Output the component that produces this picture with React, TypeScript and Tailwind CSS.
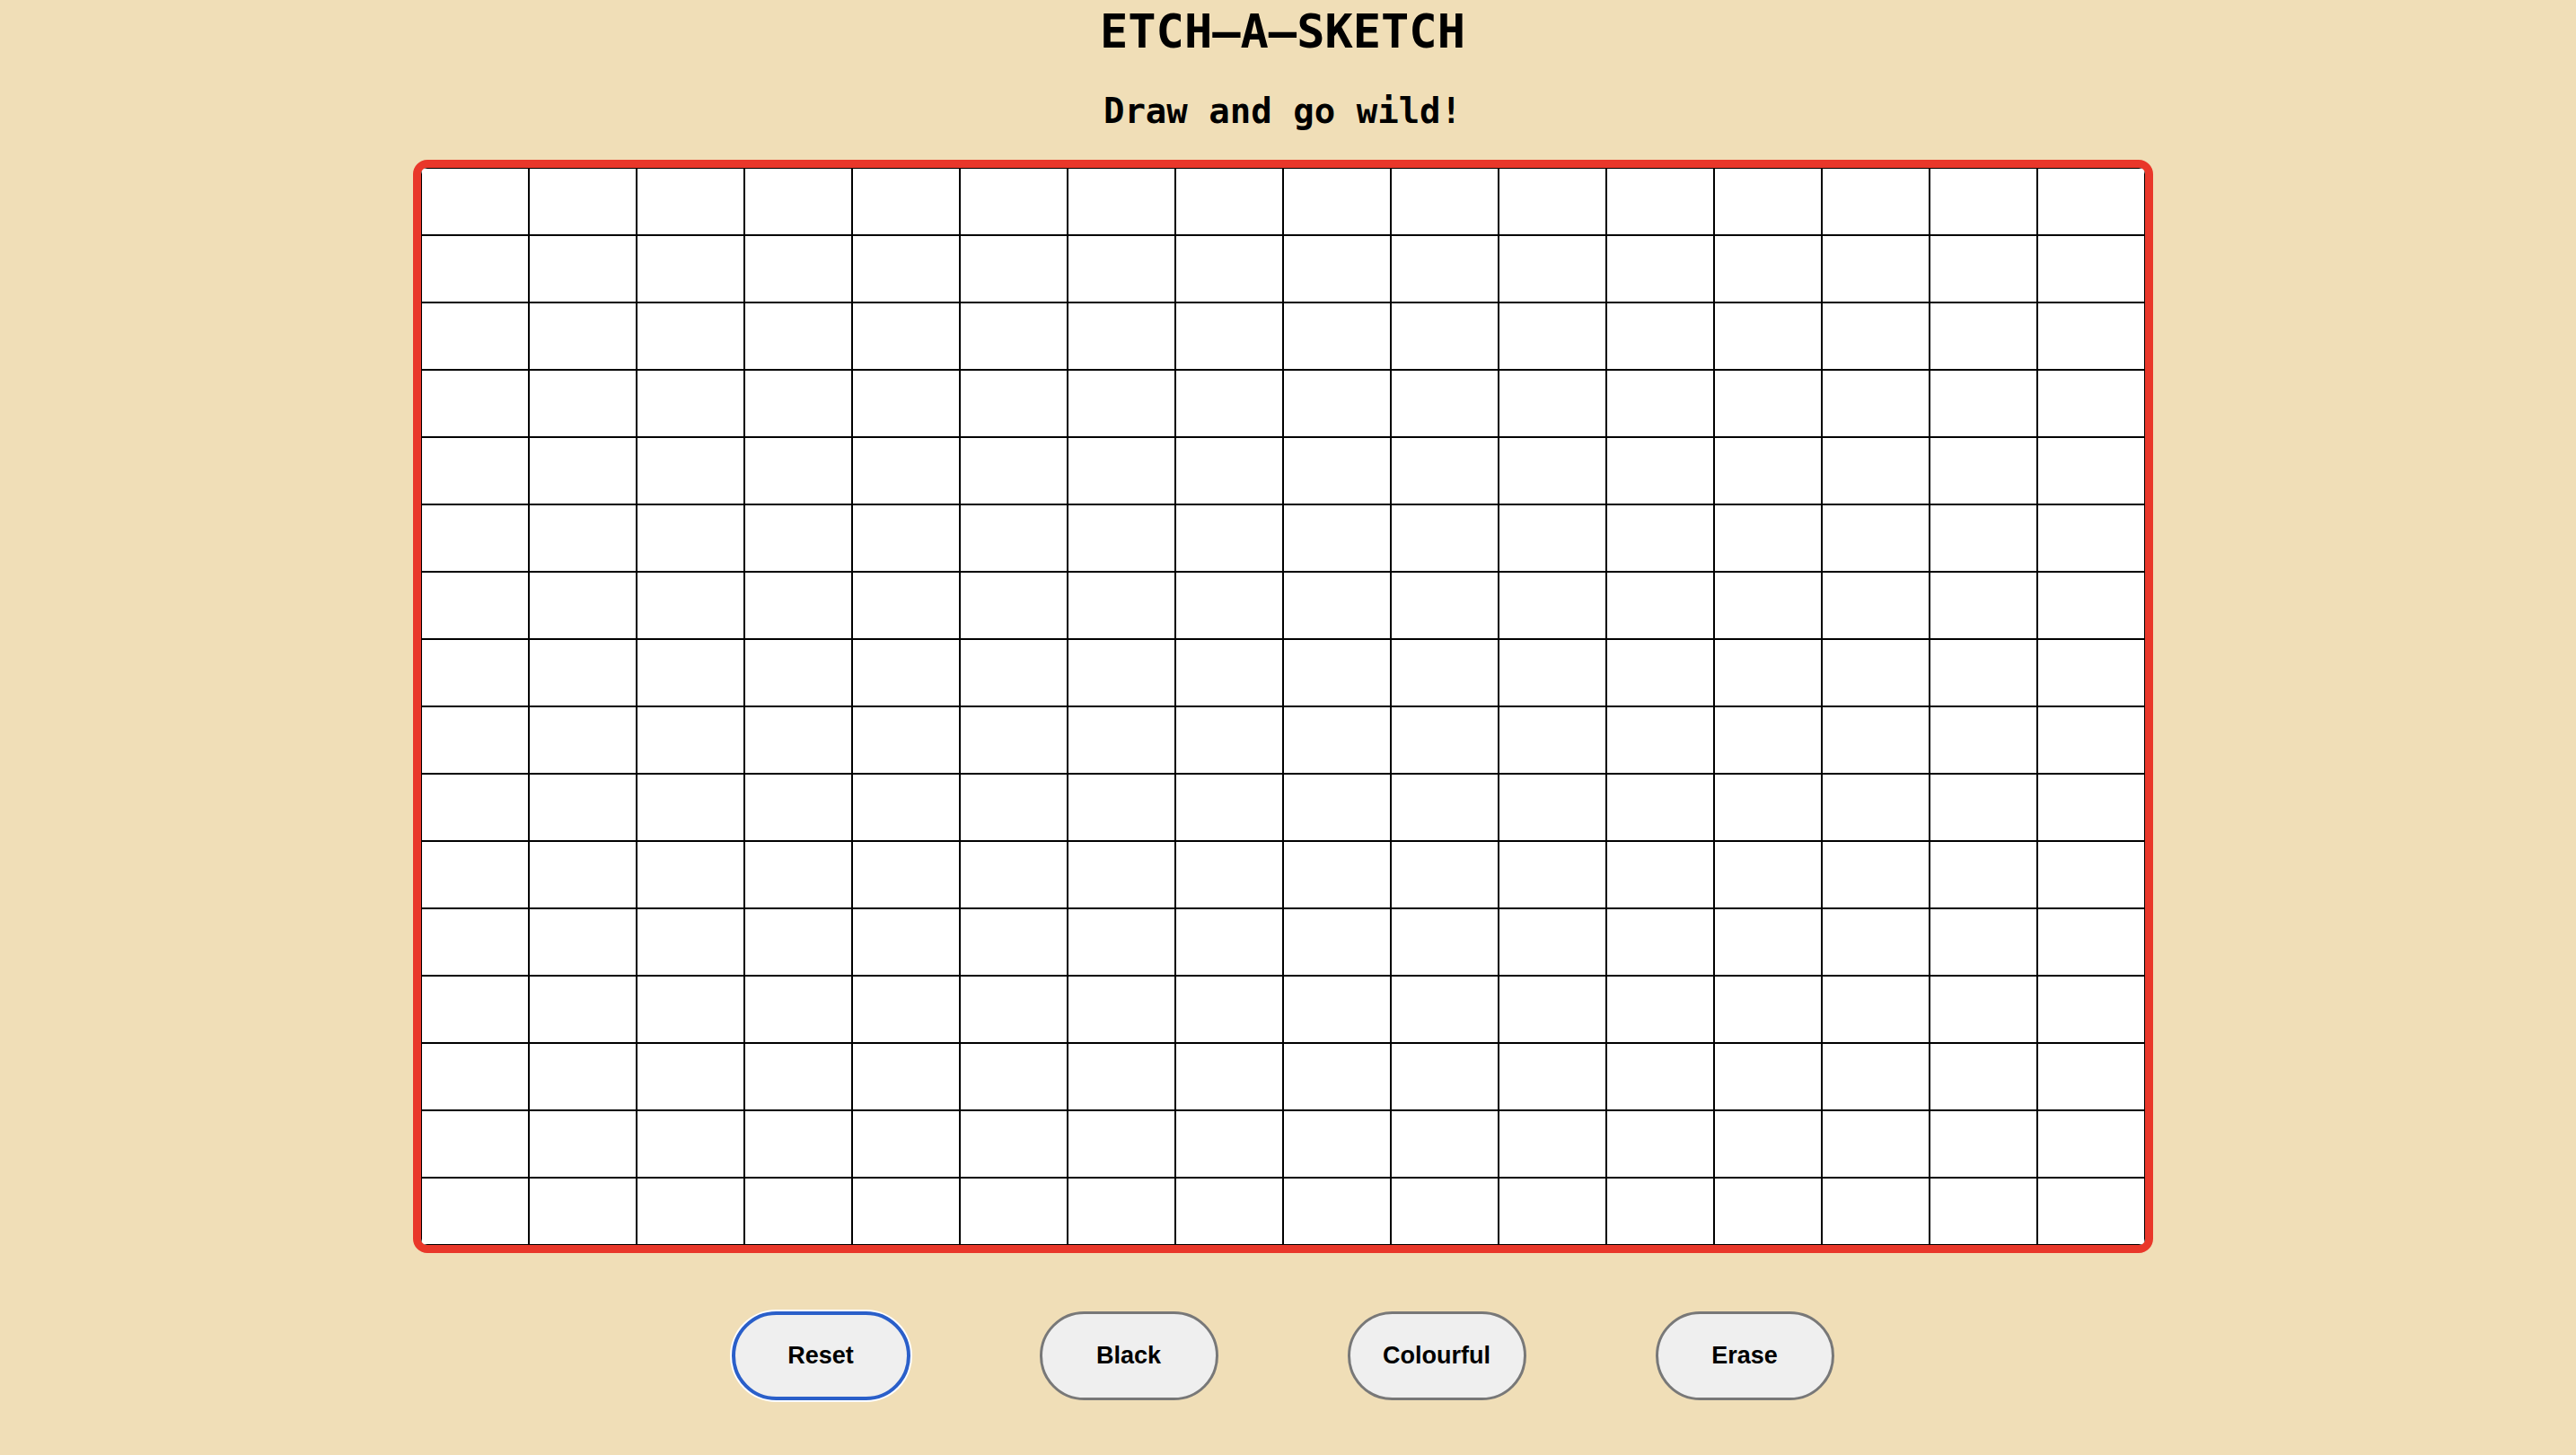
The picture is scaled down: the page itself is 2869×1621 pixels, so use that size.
import React from "react";

const cells = Array.from({ length: 256 }, (_, i) => i);

function Btn({ label, focused }: { label: string; focused?: boolean }) {
  return (
    <button
      className={
        "w-[199px] h-[99px] rounded-full bg-[#efefef] text-black font-bold text-[27px] leading-none flex items-center justify-center " +
        (focused
          ? "border-[4px] border-[#2a5fc9] shadow-[0_0_0_2px_#ffffff]"
          : "border-[3.5px] border-[#787878]")
      }
      style={{ fontFamily: '"Liberation Sans", Arial, sans-serif' }}
    >
      {label}
    </button>
  );
}

export default function App() {
  return (
    <div className="min-h-screen w-full bg-[#f0deb7] pr-[12px]">
      <div className="flex flex-col items-center">
        <h1
          className="mt-[9px] h-[53px] text-[52px] leading-none font-bold text-black"
          style={{ fontFamily: '"DejaVu Sans Mono", monospace' }}
        >
          ETCH–A–SKETCH
        </h1>
        <h2
          className="mt-[42px] h-[38px] text-[39px] leading-none font-bold text-black"
          style={{ fontFamily: '"DejaVu Sans Mono", monospace' }}
        >
          Draw and go wild!
        </h2>
        <div className="mt-[36px] border-[9px] border-[#e9372a] rounded-[16px] overflow-hidden">
          <div className="w-[1920px] h-[1200px] bg-white grid grid-cols-16 grid-rows-16">
            {cells.map((i) => (
              <div key={i} className="bg-white border border-black" />
            ))}
          </div>
        </div>
        <div className="mt-[65px] flex gap-[144px]">
          <Btn label="Reset" focused />
          <Btn label="Black" />
          <Btn label="Colourful" />
          <Btn label="Erase" />
        </div>
      </div>
    </div>
  );
}
